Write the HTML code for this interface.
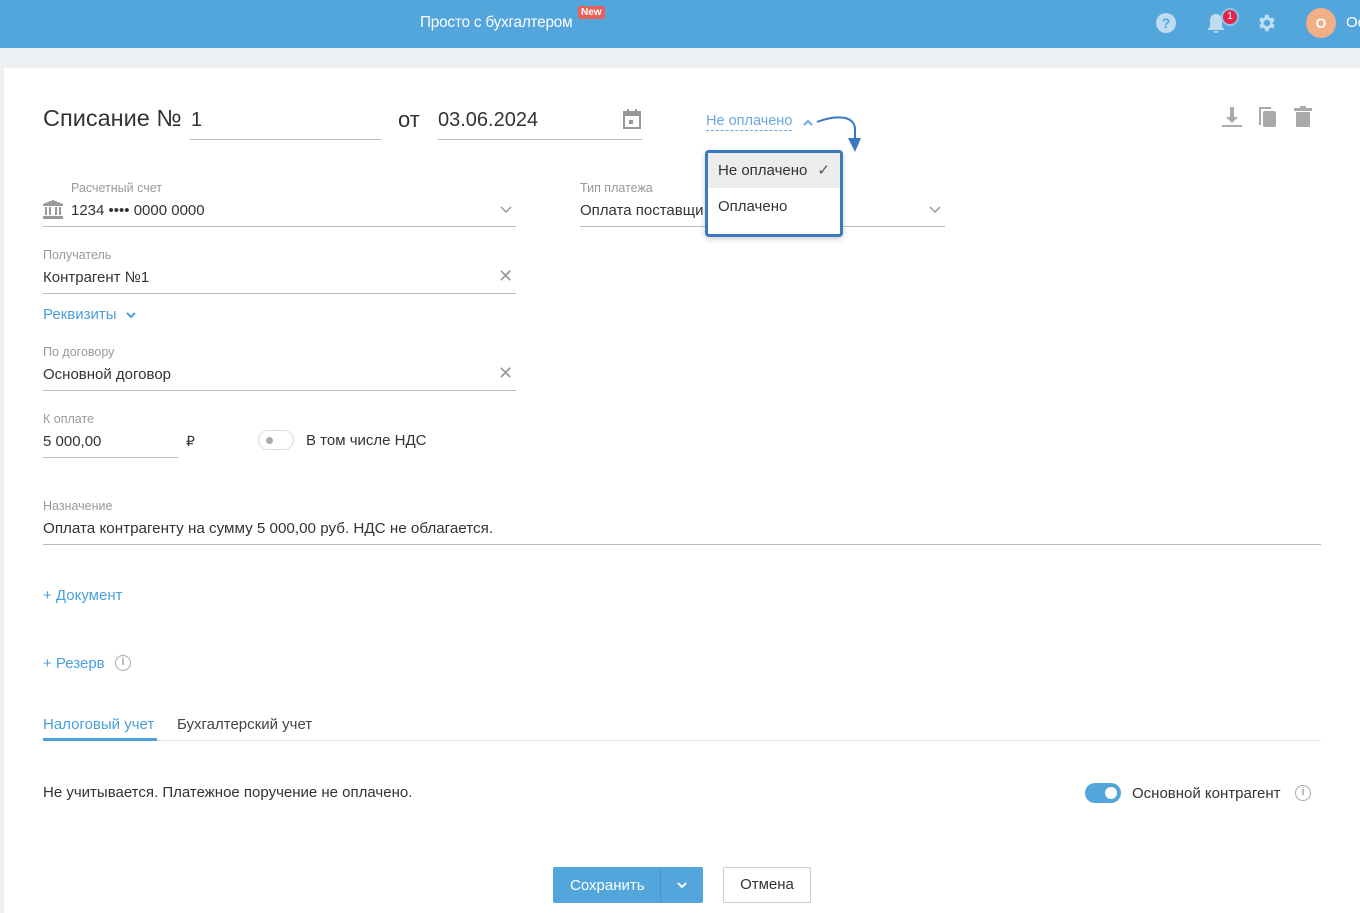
<!DOCTYPE html>
<html><head><meta charset="utf-8"><style>
*{margin:0;padding:0;box-sizing:border-box}
body{width:1360px;height:913px;overflow:hidden;background:#ecf0f3;font-family:"Liberation Sans",sans-serif;color:#333;font-size:15px;position:relative}
.a{position:absolute;white-space:nowrap}
.hdr{position:absolute;left:0;top:0;width:1360px;height:48px;background:#53a6dc}
.card{position:absolute;left:4px;top:68px;width:1356px;height:845px;background:#fff}
.lbl{font-size:12.5px;color:#999}
.line{position:absolute;height:1px;background:#bbb}
.blue{color:#4a9fdc}
</style></head><body>
<div class="hdr"></div>
<div class="a" style="left:420px;top:14px;color:#fff;font-size:15.3px;letter-spacing:-0.2px">Просто с бухгалтером</div>
<div class="a" style="left:578px;top:6px;background:#e8605a;color:#fff;font-size:10px;padding:1px 3px;border-radius:2px;font-weight:bold">New</div>
<div class="a" style="left:1156px;top:13px;width:20px;height:20px;border-radius:50%;background:#bfdcf2;color:#53a6dc;font-weight:bold;font-size:14px;text-align:center;line-height:20px">?</div>
<svg class="a" style="left:1206px;top:11px" width="22" height="24" viewBox="0 0 22 24"><path d="M10 3c-4 0-6 3-6 7v6l-2 2v1h16v-1l-2-2v-6c0-4-2-7-6-7z M8 20h4a2 2 0 0 1-4 0z" fill="#bfdcf2"/></svg>
<div class="a" style="left:1221px;top:8px;width:18px;height:18px;border-radius:50%;background:#e0264a;border:2px solid #8cc4ec;color:#fff;font-size:10px;text-align:center;line-height:14px">1</div>
<svg class="a" style="left:1255px;top:12px" width="22" height="22" viewBox="0 0 24 24"><path fill="#bfdcf2" d="M19.4 13a7.5 7.5 0 0 0 0-2l2.1-1.6-2-3.5-2.5 1a7 7 0 0 0-1.7-1L15 3h-4l-.4 2.9a7 7 0 0 0-1.7 1l-2.5-1-2 3.5L6.6 11a7.5 7.5 0 0 0 0 2l-2.1 1.6 2 3.5 2.5-1a7 7 0 0 0 1.7 1L11 21h4l.4-2.9a7 7 0 0 0 1.7-1l2.5 1 2-3.5zM13 15.5a3.5 3.5 0 1 1 0-7 3.5 3.5 0 0 1 0 7z"/></svg>
<div class="a" style="left:1306px;top:8px;width:30px;height:30px;border-radius:50%;background:#f2ae84;color:#fff;font-weight:bold;text-align:center;line-height:30px;font-size:14px">О</div>
<div class="a" style="left:1346px;top:14px;color:#fff;font-size:15px">Ос</div>
<div class="card"></div>

<div class="a" style="left:43px;top:105px;font-size:23.5px;color:#333">Списание №</div>
<div class="a" style="left:191px;top:109px;font-size:20px">1</div>
<div class="line" style="left:190px;top:139px;width:191px"></div>
<div class="a" style="left:398px;top:107px;font-size:22px">от</div>
<div class="a" style="left:438px;top:109px;font-size:20px">03.06.2024</div>
<div class="line" style="left:438px;top:139px;width:204px"></div>
<svg class="a" style="left:623px;top:109px" width="18" height="20" viewBox="0 0 18 20"><rect x="1" y="3" width="16" height="16" fill="none" stroke="#999" stroke-width="2"/><rect x="1" y="3" width="16" height="4" fill="#999"/><rect x="4" y="0" width="2" height="4" fill="#999"/><rect x="12" y="0" width="2" height="4" fill="#999"/><rect x="6" y="11" width="4" height="4" fill="#999"/></svg>
<div class="a" style="left:706px;top:113px;font-size:14.5px;color:#6aa9e0;border-bottom:1px dashed #6aa9e0;line-height:17px">Не оплачено</div>
<svg class="a" style="left:803px;top:119px" width="10" height="7"><path d="M1 6l4-4 4 4" stroke="#6aa9e0" stroke-width="2" fill="none"/></svg>
<svg class="a" style="left:815px;top:114px" width="46" height="40" viewBox="0 0 46 40"><path d="M2 8 C18 2 38 0 40 14 L40 28" fill="none" stroke="#3a78c0" stroke-width="2"/><path d="M33 24 L40 38 L46 24z" fill="#3a78c0"/></svg>
<svg class="a" style="left:1220px;top:105px" width="24" height="24" viewBox="0 0 24 24"><path d="M10 2h4v10h4l-6 6-6-6h4z" fill="#aaa"/><rect x="2" y="20" width="20" height="2" fill="#aaa"/></svg>
<svg class="a" style="left:1256px;top:105px" width="24" height="24" viewBox="0 0 24 24"><path d="M3 4h2v16h-2z M3 2h12v2h-12z" fill="#aaa"/><rect x="7" y="6" width="13" height="16" rx="2" fill="#aaa"/></svg>
<svg class="a" style="left:1292px;top:105px" width="22" height="24" viewBox="0 0 22 24"><rect x="2" y="3" width="18" height="3" fill="#aaa"/><rect x="8" y="1" width="6" height="3" fill="#aaa"/><path d="M4 7h14v15H4z" fill="#aaa"/></svg>

<div class="a lbl" style="left:71px;top:181px">Расчетный счет</div>
<svg class="a" style="left:43px;top:200px" width="20" height="19" viewBox="0 0 20 19"><path d="M10 0L0 4v2h20V4z" fill="#999"/><rect x="2" y="7" width="2" height="8" fill="#999"/><rect x="6" y="7" width="2" height="8" fill="#999"/><rect x="12" y="7" width="2" height="8" fill="#999"/><rect x="16" y="7" width="2" height="8" fill="#999"/><rect x="0" y="16" width="20" height="3" fill="#999"/></svg>
<div class="a" style="left:71px;top:202px">1234 •••• 0000 0000</div>
<svg class="a" style="left:500px;top:206px" width="12" height="8"><path d="M1 1l5 5 5-5" stroke="#999" stroke-width="1.5" fill="none"/></svg>
<div class="line" style="left:43px;top:226px;width:473px"></div>

<div class="a lbl" style="left:580px;top:181px">Тип платежа</div>
<div class="a" style="left:580px;top:202px">Оплата поставщи</div>
<svg class="a" style="left:929px;top:206px" width="12" height="8"><path d="M1 1l5 5 5-5" stroke="#999" stroke-width="1.5" fill="none"/></svg>
<div class="line" style="left:580px;top:226px;width:365px"></div>

<div class="a" style="left:705px;top:150px;width:138px;height:87px;border:3px solid #3a78c0;border-radius:4px;background:#fff;box-shadow:0 2px 6px rgba(0,0,0,.2)">
<div style="height:35px;background:#ececec;padding:9px 0 0 10px;font-size:15px;position:relative">Не оплачено<span style="position:absolute;right:10px;top:8px;color:#555">✓</span></div>
<div style="padding:10px 0 0 10px;font-size:15px">Оплачено</div>
</div>

<div class="a lbl" style="left:43px;top:248px">Получатель</div>
<div class="a" style="left:43px;top:269px">Контрагент №1</div>
<div class="a" style="left:498px;top:266px;font-size:18px;color:#999">✕</div>
<div class="line" style="left:43px;top:293px;width:473px"></div>
<div class="a blue" style="left:43px;top:306px">Реквизиты</div>
<svg class="a" style="left:126px;top:312px" width="10" height="7"><path d="M1 1l4 4 4-4" stroke="#4a9fdc" stroke-width="2" fill="none"/></svg>

<div class="a lbl" style="left:43px;top:345px">По договору</div>
<div class="a" style="left:43px;top:366px">Основной договор</div>
<div class="a" style="left:498px;top:363px;font-size:18px;color:#999">✕</div>
<div class="line" style="left:43px;top:390px;width:473px"></div>

<div class="a lbl" style="left:43px;top:412px">К оплате</div>
<div class="a" style="left:43px;top:433px">5 000,00</div>
<div class="line" style="left:43px;top:457px;width:135px"></div>
<div class="a" style="left:186px;top:433px;font-size:14px">₽</div>
<div class="a" style="left:258px;top:430px;width:36px;height:20px;border:1px solid #ddd;border-radius:10px"><div style="position:absolute;left:7px;top:6px;width:7px;height:7px;border-radius:50%;background:#aaa"></div></div>
<div class="a" style="left:306px;top:432px">В том числе НДС</div>

<div class="a lbl" style="left:43px;top:499px">Назначение</div>
<div class="a" style="left:43px;top:520px;font-size:15.2px">Оплата контрагенту на сумму 5 000,00 руб. НДС не облагается.</div>
<div class="line" style="left:43px;top:544px;width:1278px"></div>

<div class="a blue" style="left:43px;top:587px">+ Документ</div>
<div class="a blue" style="left:43px;top:655px">+ Резерв</div>
<div class="a" style="left:115px;top:655px;width:16px;height:16px;border:1.5px solid #aaa;border-radius:50%;color:#aaa;font-size:11px;text-align:center;line-height:13px;font-weight:bold">i</div>

<div class="a blue" style="left:43px;top:716px">Налоговый учет</div>
<div class="a" style="left:177px;top:716px;color:#444">Бухгалтерский учет</div>
<div class="line" style="left:43px;top:740px;width:1278px;background:#e3e3e3"></div>
<div class="a" style="left:43px;top:738px;width:114px;height:3px;background:#4a9fdc"></div>

<div class="a" style="left:43px;top:784px">Не учитывается. Платежное поручение не оплачено.</div>
<div class="a" style="left:1085px;top:783px;width:36px;height:20px;border-radius:10px;background:#53a6dc"><div style="position:absolute;right:4px;top:4px;width:12px;height:12px;border-radius:50%;background:#fff"></div></div>
<div class="a" style="left:1132px;top:785px">Основной контрагент</div>
<div class="a" style="left:1295px;top:785px;width:16px;height:16px;border:1.5px solid #aaa;border-radius:50%;color:#aaa;font-size:11px;text-align:center;line-height:13px;font-weight:bold">i</div>

<div class="a" style="left:553px;top:867px;width:150px;height:36px;background:#53a6dc;border-radius:2px"></div>
<div class="a" style="left:660px;top:867px;width:1px;height:36px;background:#4a94c6"></div>
<div class="a" style="left:570px;top:877px;color:#fff">Сохранить</div>
<svg class="a" style="left:677px;top:882px" width="10" height="7"><path d="M1 1l4 4 4-4" stroke="#fff" stroke-width="2" fill="none"/></svg>
<div class="a" style="left:723px;top:867px;width:88px;height:36px;border:1px solid #ccc;border-radius:2px;text-align:center;line-height:34px">Отмена</div>
</body></html>
